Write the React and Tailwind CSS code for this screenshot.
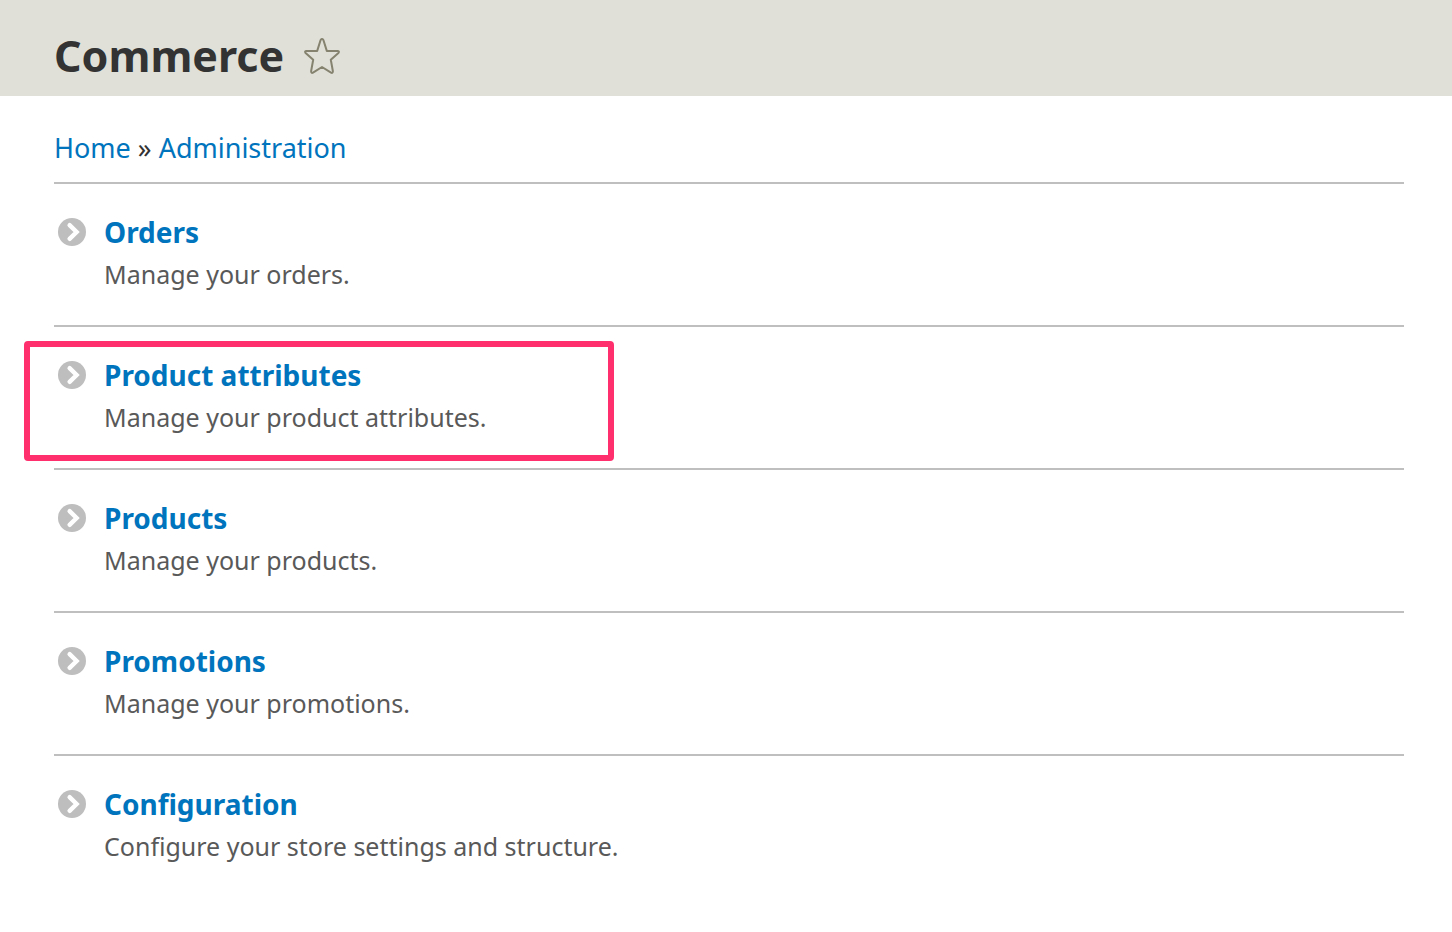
const items = [
  { title: "Orders", description: "Manage your orders." },
  { title: "Product attributes", description: "Manage your product attributes.", highlighted: true },
  { title: "Products", description: "Manage your products." },
  { title: "Promotions", description: "Manage your promotions." },
  { title: "Configuration", description: "Configure your store settings and structure." },
];

function StarIcon() {
  return (
    <svg className="h-9 w-9" viewBox="0 0 36 36" fill="none" stroke="#85836f" strokeWidth="2" strokeLinejoin="round" aria-hidden="true">
      <path d="M16.6 2Q18 .2 19.4 2L22.8 12.9H33.8Q35.8 13.4 34.4 15L26.8 21.8L28.9 33.2Q28.8 35.5 27 34.7L18 29L9 34.7Q7.2 35.5 7.1 33.2L9.2 21.8L1.6 15Q.2 13.4 2.2 12.9H13.2Z" />
    </svg>
  );
}

function ChevronIcon() {
  return (
    <svg className="h-7 w-7 shrink-0" viewBox="0 0 28 28" aria-hidden="true">
      <circle cx="14" cy="14" r="14" fill="#bebebe" />
      <path d="M11.6 7.2L18.6 14L11.6 20.8" fill="none" stroke="#fff" strokeWidth="4.4" strokeLinecap="round" />
    </svg>
  );
}

export default function App() {
  return (
    <div className="min-h-screen bg-white font-['Noto_Sans','Open_Sans',sans-serif] text-[#333]">
      <header className="flex items-center gap-5 bg-[#e0e0d8] px-[54px] pt-4">
        <h1 className="text-[43px] leading-[80px] font-bold">Commerce</h1>
        <button type="button" aria-label="Add to shortcuts">
          <StarIcon />
        </button>
      </header>
      <main className="pt-8 pr-12 pb-8 pl-[54px]">
        <nav aria-label="Breadcrumb" className="pb-[14px] text-[27px] leading-10">
          <a href="#home" className="text-[#0074bd]">Home</a>
          <span className="text-[#333]"> » </span>
          <a href="#administration" className="text-[#0074bd]">Administration</a>
        </nav>
        <ul>
          {items.map((item) => (
            <li key={item.title} className="relative border-t-2 border-[#bfbfbf] pt-7 pb-[30px] pl-1">
              <a href={"#" + item.title.toLowerCase().replace(" ", "-")} className="flex items-center gap-[18px] text-[28px] leading-10 font-bold text-[#0074bd]">
                <ChevronIcon />
                {item.title}
              </a>
              <p className="pt-px pl-[46px] text-[25px] leading-[42px] text-[#595959]">{item.description}</p>
              {item.highlighted && (
                <div className="pointer-events-none absolute top-[14px] -left-[30px] h-[120px] w-[590px] rounded-[4px] border-6 border-[#ff2f6e]" />
              )}
            </li>
          ))}
        </ul>
      </main>
    </div>
  );
}
